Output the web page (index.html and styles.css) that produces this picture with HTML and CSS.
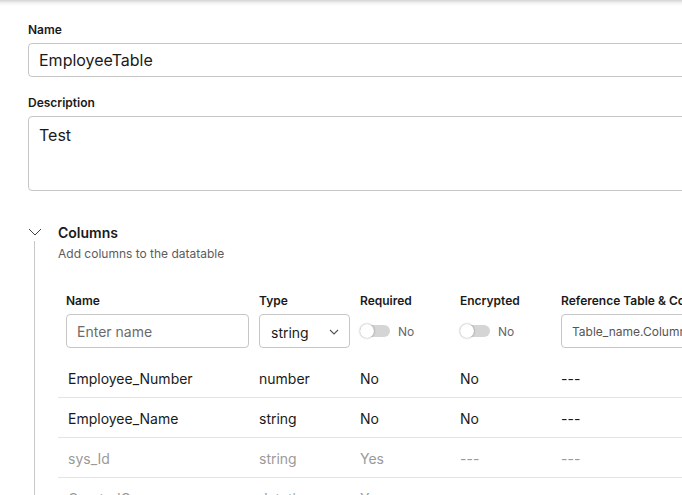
FILE: index.html
```html
<!DOCTYPE html>
<html>
<head>
<meta charset="utf-8">
<link rel="stylesheet" href="styles.css">
</head>
<body>
<div class="topshade"></div>
<main class="form">
  <div class="field first">
    <label class="label">Name</label>
    <div class="input big">EmployeeTable</div>
  </div>
  <div class="field">
    <label class="label">Description</label>
    <div class="input area">Test</div>
  </div>

  <section class="columns">
    <div class="sec-head">
      <span class="chev"><svg width="14" height="8" viewBox="0 0 14 8"><path d="M1 1 L7 7 L13 1" fill="none" stroke="#444" stroke-width="1"/></svg></span>
      <span class="sec-title">Columns</span>
    </div>
    <div class="sec-body">
      <div class="sec-sub">Add columns to the datatable</div>
      <div class="table">
        <div class="hrow">
          <div class="hcell">Name</div>
          <div class="hcell">Type</div>
          <div class="hcell">Required</div>
          <div class="hcell">Encrypted</div>
          <div class="hcell">Reference Table &amp; Column</div>
        </div>
        <div class="irow">
          <div class="cell"><div class="tinput name-in">Enter name</div></div>
          <div class="cell"><div class="tinput select"><span>string</span><svg width="10" height="6" viewBox="0 0 10 6"><path d="M1 1 L5 5 L9 1" fill="none" stroke="#555" stroke-width="1.1"/></svg></div></div>
          <div class="cell"><span class="toggle"><span class="knob"></span></span><span class="tlabel">No</span></div>
          <div class="cell"><span class="toggle"><span class="knob"></span></span><span class="tlabel">No</span></div>
          <div class="cell"><div class="tinput ref-in">Table_name.Column_name</div></div>
        </div>
        <div class="row">
          <div class="cell">Employee_Number</div>
          <div class="cell">number</div>
          <div class="cell">No</div>
          <div class="cell">No</div>
          <div class="cell">---</div>
        </div>
        <div class="row">
          <div class="cell">Employee_Name</div>
          <div class="cell">string</div>
          <div class="cell">No</div>
          <div class="cell">No</div>
          <div class="cell">---</div>
        </div>
        <div class="row sys">
          <div class="cell">sys_Id</div>
          <div class="cell">string</div>
          <div class="cell">Yes</div>
          <div class="cell">---</div>
          <div class="cell">---</div>
        </div>
        <div class="row sys">
          <div class="cell">CreatedOn</div>
          <div class="cell">datetime</div>
          <div class="cell">Yes</div>
          <div class="cell">---</div>
          <div class="cell">---</div>
        </div>
      </div>
    </div>
  </section>
</main>
</body>
</html>
```

FILE: styles.css
```css
html, body {
  margin: 0;
  padding: 0;
  background: #ffffff;
  overflow: hidden;
}
body {
  font-family: Inter, "Noto Sans", sans-serif;
  color: #1a1a1a;
  width: 682px;
  height: 495px;
}
.topshade {
  height: 6px;
  background: linear-gradient(#d4d4d4, #f3f3f3 50%, #ffffff);
}
.form {
  padding: 16px 0 0 28px;
  width: 760px;
}
.field {
  display: flex;
  flex-direction: column;
  margin-bottom: 13px;
}
.field.first {
  margin-bottom: 18px;
}
.label {
  font-size: 12px;
  font-weight: 600;
  line-height: 16px;
  margin-bottom: 5px;
}
.input {
  border: 1px solid #c6c6c6;
  border-radius: 4px;
  font-size: 16px;
  padding: 0 10px;
  color: #1a1a1a;
}
.input.big {
  height: 32px;
  line-height: 32px;
}
.input.area {
  line-height: 20px;
  padding-top: 8px;
  box-sizing: border-box;
  height: 75px;
}
.columns {
  margin-top: 32px;
}
.sec-head {
  display: flex;
  align-items: center;
  height: 18px;
}
.chev {
  width: 14px;
  display: flex;
  justify-content: center;
  margin-right: 16px;
}
.sec-title {
  font-size: 14px;
  font-weight: 600;
}
.sec-body {
  margin-left: 6px;
  border-left: 1px solid #c8c8c8;
  padding-left: 23px;
  padding-top: 5px;
}
.sec-sub {
  font-size: 12px;
  color: #5c5c5c;
  line-height: 16px;
}
.table {
  margin-top: 31px;
  padding-bottom: 40px;
}
.hrow, .irow, .row {
  display: grid;
  grid-template-columns: 193px 101px 100px 101px 200px;
}
.hcell {
  font-size: 12px;
  font-weight: 600;
  line-height: 16px;
  padding-left: 8px;
}
.irow {
  margin-top: 5px;
  height: 34px;
  margin-bottom: 10px;
}
.irow .cell {
  padding-left: 8px;
  display: flex;
  align-items: center;
}
.tinput {
  box-sizing: border-box;
  height: 34px;
  border: 1px solid #c6c6c6;
  border-radius: 4px;
  display: flex;
  align-items: center;
}
.name-in {
  width: 183px;
  padding-left: 10px;
  font-size: 14px;
  color: #6b6b6b;
}
.select {
  width: 91px;
  padding: 0 10px 0 11px;
  justify-content: space-between;
  font-size: 14px;
  color: #1a1a1a;
  padding-top: 2px;
}
.ref-in {
  width: 220px;
  padding-left: 10px;
  font-size: 12px;
  color: #555;
  white-space: nowrap;
}
.toggle {
  position: relative;
  width: 30px;
  height: 12px;
  border-radius: 6px;
  background: #d5d5d5;
  margin-right: 8px;
}
.knob {
  position: absolute;
  left: 0;
  top: -1px;
  width: 14px;
  height: 14px;
  border-radius: 50%;
  background: #ffffff;
  box-shadow: 0 0 2px rgba(0,0,0,0.45);
}
.tlabel {
  font-size: 12px;
  color: #666;
}
.row {
  height: 39px;
  border-bottom: 1px solid #e4e4e4;
  align-items: center;
  font-size: 14px;
  color: #1a1a1a;
}
.row .cell {
  padding-left: 10px;
  padding-top: 2px;
}
.row .cell + .cell {
  padding-left: 8px;
}
.row.sys {
  color: #9a9a9a;
}
```
